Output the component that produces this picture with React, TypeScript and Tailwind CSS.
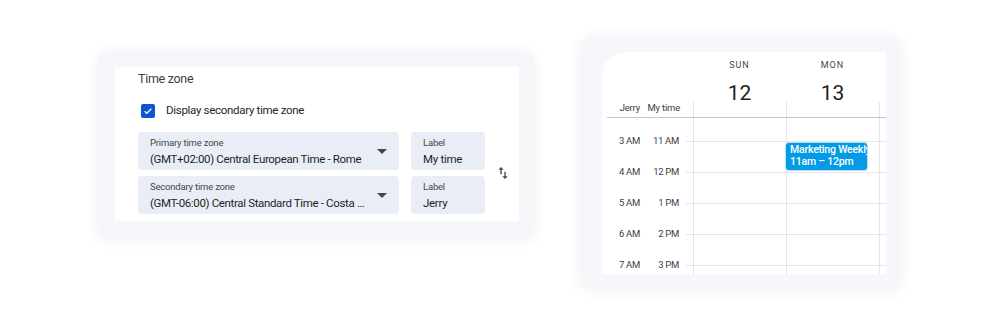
import React from 'react';

const font = { fontFamily: 'Roboto, "Noto Sans", Arial, sans-serif' };

const Caret: React.FC = () => (
  <svg width="10" height="5" viewBox="0 0 10 5" className="shrink-0">
    <path d="M0 0h10L5 5z" fill="#444746" />
  </svg>
);

const SwapIcon: React.FC = () => (
  <svg width="16" height="16" viewBox="0 0 24 24" className="shrink-0">
    <path d="M16 17.01V10h-2v7.01h-3L15 21l4-3.99h-3zM9 3L5 6.99h3V14h2V6.99h3L9 3z" fill="#444746" />
  </svg>
);

const ZoneSelect: React.FC<{ label: string; value: string }> = ({ label, value }) => (
  <div className="w-[261px] h-[38px] rounded-[4px] bg-[#e9eef6] flex items-center pl-[12px] pr-[12px]">
    <div className="flex-1 min-w-0 pt-[1px] pr-[8px]">
      <div className="text-[9.5px] leading-[12px] tracking-[-0.2px] text-[#444746]">{label}</div>
      <div className="text-[11.5px] leading-[16px] tracking-[-0.35px] text-[#1f1f1f] mt-[2px] whitespace-nowrap overflow-hidden text-ellipsis">{value}</div>
    </div>
    <Caret />
  </div>
);

const LabelBox: React.FC<{ value: string }> = ({ value }) => (
  <div className="w-[74px] h-[38px] rounded-[4px] bg-[#e9eef6] pl-[12px] pt-[5px]">
    <div className="text-[9.5px] leading-[12px] tracking-[-0.2px] text-[#444746]">Label</div>
    <div className="text-[11.5px] leading-[16px] tracking-[-0.3px] text-[#1f1f1f] mt-[2px]">{value}</div>
  </div>
);

const TimeZoneCard: React.FC = () => (
  <div className="ml-[98px] mt-[50px] w-[436px] h-[187px] rounded-[12px] bg-[#f6f7fa] shadow-[0_3px_14px_rgba(60,64,67,0.08)] pl-[17px] pt-[17px]">
    <div className="w-[404px] h-[154px] bg-white pl-[23px] pt-[2px]">
      <div className="text-[12.5px] leading-[20px] tracking-[-0.3px] text-[#3c4043]">Time zone</div>
      <div className="flex items-center h-[20px] mt-[12px] pl-[3px]">
        <div className="w-[14px] h-[14px] rounded-[2px] bg-[#0b57d0] flex items-center justify-center">
          <svg width="10" height="10" viewBox="0 0 24 24">
            <path d="M4 12.5l5 5L20 6.5" fill="none" stroke="white" strokeWidth="3" />
          </svg>
        </div>
        <span className="ml-[11px] text-[11.5px] tracking-[-0.3px] text-[#1f1f1f]">Display secondary time zone</span>
      </div>
      <div className="flex items-center mt-[11px]">
        <div className="flex flex-col gap-[6px]">
          <div className="flex gap-[12px]">
            <ZoneSelect label="Primary time zone" value="(GMT+02:00) Central European Time - Rome" />
            <LabelBox value="My time" />
          </div>
          <div className="flex gap-[12px]">
            <ZoneSelect label="Secondary time zone" value="(GMT-06:00) Central Standard Time - Costa Rica" />
            <LabelBox value="Jerry" />
          </div>
        </div>
        <div className="ml-[10px]">
          <SwapIcon />
        </div>
      </div>
    </div>
  </div>
);

const hours = [
  ['3 AM', '11 AM'],
  ['4 AM', '12 PM'],
  ['5 AM', '1 PM'],
  ['6 AM', '2 PM'],
  ['7 AM', '3 PM'],
];

const days = [
  { name: 'SUN', num: '12' },
  { name: 'MON', num: '13' },
];

const CalendarCard: React.FC = () => (
  <div className="ml-[46px] mt-[35px] w-[321px] h-[253px] rounded-[14px] bg-[#f6f7fa] shadow-[0_3px_14px_rgba(60,64,67,0.08)] pl-[22px] pt-[17px]">
    <div className="w-[284px] h-[222px] bg-white rounded-tl-[24px] overflow-hidden flex flex-col">
      {/* header */}
      <div className="flex h-[65px] shrink-0">
        <div className="w-[91px] flex items-end pb-[3px] text-[9.5px] leading-[12px] tracking-[-0.2px] text-[#3c4043]">
          <div className="w-[38px] text-right">Jerry</div>
          <div className="w-[40px] text-right">My time</div>
        </div>
        {days.map((d) => (
          <div key={d.name} className="w-[93px] flex flex-col">
            <div className="h-[50px] flex flex-col items-center">
              <div className="mt-[7px] text-[9px] leading-[12px] tracking-[1px] text-[#444746]">{d.name}</div>
              <div className="mt-[10px] text-[21px] leading-[24px] text-[#1f1f1f]">{d.num}</div>
            </div>
            <div className="flex-1 border-l border-[#e3e5e8]" />
          </div>
        ))}
        <div className="flex-1 border-l border-[#e3e5e8] mt-[50px]" />
      </div>
      <div className="h-px bg-[#c4c7c5] ml-[5px] shrink-0" />
      {/* body */}
      <div className="flex flex-1 min-h-0">
        <div className="w-[84px] flex flex-col pt-[8px] text-[9.5px] tracking-[-0.3px] text-[#3c4043]">
          {hours.map(([a, b]) => (
            <div key={a} className="h-[31px] shrink-0 flex items-center">
              <div className="w-[38px] text-right">{a}</div>
              <div className="w-[39px] text-right">{b}</div>
            </div>
          ))}
        </div>
        <div className="flex-1 flex flex-col">
          <div className="flex h-[23px] shrink-0">
            <div className="w-[7px]" />
            <div className="w-[93px] border-l border-[#e3e5e8]" />
            <div className="w-[93px] border-l border-[#e3e5e8]" />
            <div className="flex-1 border-l border-[#e3e5e8]" />
          </div>
          {hours.map(([a], i) => (
            <div key={a} className="flex h-[31px] shrink-0">
              <div className="w-[7px] border-t border-[#e3e6ec]" />
              <div className="w-[93px] border-l border-t border-l-[#e3e5e8] border-t-[#e3e6ec]" />
              <div className="w-[93px] border-l border-t border-l-[#e3e5e8] border-t-[#e3e6ec] relative">
                {i === 0 && (
                  <div className="absolute top-0 left-[-2px] w-[83px] h-[29px] rounded-[4px] bg-[#039be5] border border-white/70 pl-[4px] pt-[1px] overflow-hidden whitespace-nowrap text-white text-[10.5px] leading-[12px] tracking-[-0.2px] font-medium">
                    <div>Marketing Weekly</div>
                    <div>11am – 12pm</div>
                  </div>
                )}
              </div>
              <div className="flex-1 border-l border-t border-l-[#e3e5e8] border-t-[#e3e6ec]" />
            </div>
          ))}
        </div>
      </div>
    </div>
  </div>
);

export default function App() {
  return (
    <div className="w-[1000px] h-[322px] bg-white flex items-start overflow-hidden" style={font}>
      <TimeZoneCard />
      <CalendarCard />
    </div>
  );
}
